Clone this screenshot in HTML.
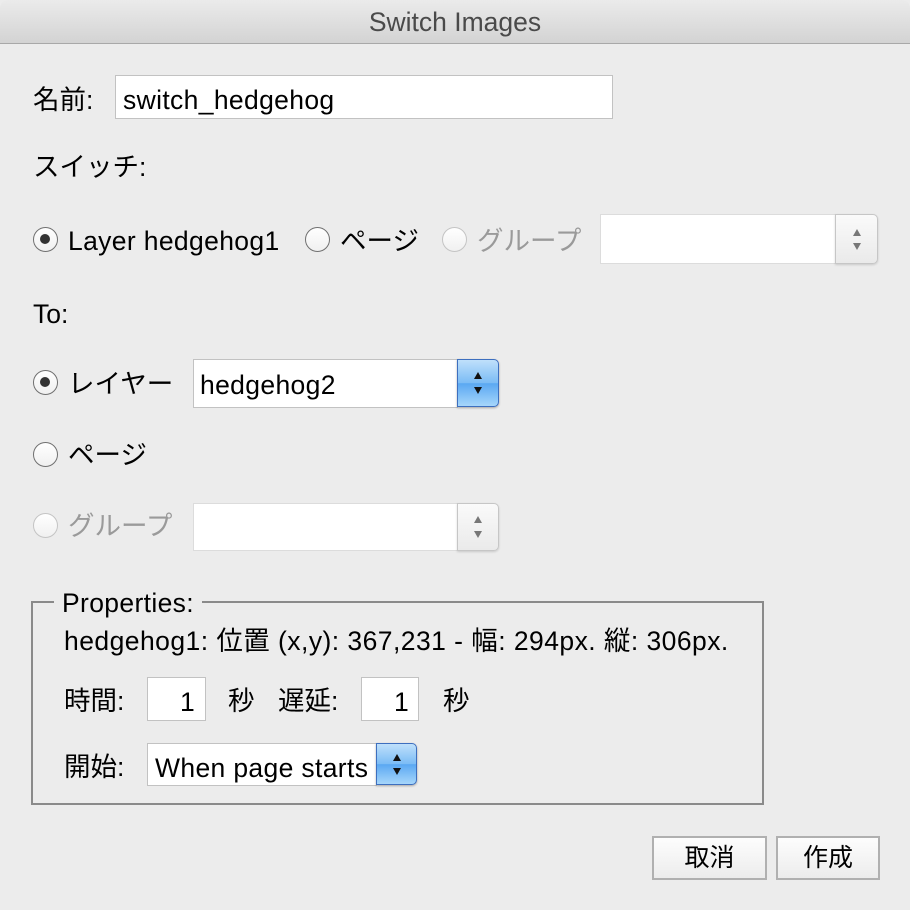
<!DOCTYPE html>
<html><head><meta charset="utf-8"><style>
*{margin:0;padding:0;box-sizing:border-box}
body{width:910px;height:910px;background:#ececec;font-family:"Liberation Sans","Noto Sans CJK JP",sans-serif;font-size:26.5px;color:#000;position:relative;overflow:hidden}
.a{position:absolute;white-space:nowrap}
.t{position:absolute;white-space:nowrap;height:30px;line-height:32px}
.ls{letter-spacing:0.35px}
.title{position:absolute;left:0;top:0;width:910px;height:44px;background:linear-gradient(#ebebeb,#d3d3d3);border-bottom:1px solid #a8a8a8;border-radius:8px 8px 0 0;text-align:center;line-height:44px;color:#4a4a4a;font-size:26.5px}
.in{position:absolute;background:#fff;border:1px solid #c2c2c2}
.dis{border-color:#dcdcdc}
.rad{position:absolute;width:25px;height:25px;border-radius:50%;border:1.5px solid #707070;background:linear-gradient(#fff,#f0f0f0)}
.rad.on::after{content:"";position:absolute;left:6px;top:6px;width:10px;height:10px;border-radius:50%;background:#333}
.rad.d{border-color:#c4c4c4}
.g{color:#9a9a9a}
.blue{position:absolute;background:linear-gradient(#bfe0fb,#7bbcf5 50%,#5aa8f2 51%,#a6d6fb);border:1px solid #3d6fbf;border-radius:0 5px 5px 0;box-shadow:0 1px 2px rgba(0,0,0,.3)}
.gray{position:absolute;background:linear-gradient(#fafafa,#eaeaea);border:1px solid #c6c6c6;border-radius:0 5px 5px 0;box-shadow:0 1px 2px rgba(0,0,0,.15)}
.ar{position:absolute;left:50%;transform:translateX(-50%);width:0;height:0;border-left:4px solid transparent;border-right:4px solid transparent}
.up{border-bottom:7px solid #111}
.dn{border-top:7px solid #111}
.gray .up{border-bottom-color:#777}.gray .dn{border-top-color:#777}
.btn{position:absolute;height:44px;background:linear-gradient(#fdfdfd,#ececec);border:2px solid #b0b0b0;text-align:center;line-height:40px;font-size:25px}
</style></head><body>
<div class="title">Switch Images</div>

<div class="t" style="left:33px;top:84px">名前:</div>
<div class="in" style="left:115px;top:75px;width:498px;height:44px"></div>
<div class="t ls" style="left:123px;top:84px">switch_hedgehog</div>

<div class="t" style="left:33px;top:151px">スイッチ:</div>

<div class="rad on" style="left:33px;top:227px"></div>
<div class="t ls" style="left:68px;top:225px">Layer hedgehog1</div>
<div class="rad" style="left:305px;top:227px"></div>
<div class="t" style="left:340px;top:225px">ページ</div>
<div class="rad d" style="left:442px;top:227px"></div>
<div class="t g" style="left:477px;top:225px">グループ</div>
<div class="in dis" style="left:600px;top:214px;width:236px;height:50px"></div>
<div class="gray" style="left:835px;top:214px;width:43px;height:50px"><div class="ar up" style="top:14px"></div><div class="ar dn" style="top:28px"></div></div>

<div class="t" style="left:33px;top:298px">To:</div>

<div class="rad on" style="left:33px;top:370px"></div>
<div class="t" style="left:68px;top:368px">レイヤー</div>
<div class="in" style="left:193px;top:359px;width:265px;height:49px"></div>
<div class="t ls" style="left:200px;top:369px">hedgehog2</div>
<div class="blue" style="left:457px;top:359px;width:42px;height:48px"><div class="ar up" style="top:12px"></div><div class="ar dn" style="top:27px"></div></div>

<div class="rad" style="left:33px;top:442px"></div>
<div class="t" style="left:68px;top:439px">ページ</div>

<div class="rad d" style="left:33px;top:513px"></div>
<div class="t g" style="left:68px;top:510px">グループ</div>
<div class="in dis" style="left:193px;top:503px;width:265px;height:48px"></div>
<div class="gray" style="left:457px;top:503px;width:42px;height:48px"><div class="ar up" style="top:12px"></div><div class="ar dn" style="top:27px"></div></div>

<div class="a" style="left:31px;top:601px;width:733px;height:204px;border:2px solid #8a8a8a"></div>
<div class="t ls" style="left:54px;top:587px;padding:0 8px;background:#ececec">Properties:</div>
<div class="t" style="left:64px;top:625px;letter-spacing:0.45px">hedgehog1: 位置 (x,y): 367,231 - 幅: 294px. 縦: 306px.</div>

<div class="t" style="left:64px;top:685px">時間:</div>
<div class="in" style="left:147px;top:677px;width:59px;height:44px"></div>
<div class="t" style="left:180px;top:686px">1</div>
<div class="t" style="left:228px;top:685px">秒</div>
<div class="t" style="left:278px;top:685px">遅延:</div>
<div class="in" style="left:361px;top:677px;width:58px;height:44px"></div>
<div class="t" style="left:394px;top:686px">1</div>
<div class="t" style="left:443px;top:685px">秒</div>

<div class="t" style="left:64px;top:751px">開始:</div>
<div class="in" style="left:147px;top:743px;width:230px;height:43px"></div>
<div class="t ls" style="left:155px;top:752px">When page starts</div>
<div class="blue" style="left:376px;top:743px;width:41px;height:42px"><div class="ar up" style="top:10px"></div><div class="ar dn" style="top:24px"></div></div>

<div class="btn" style="left:652px;top:836px;width:115px">取消</div>
<div class="btn" style="left:776px;top:836px;width:104px">作成</div>
</body></html>
